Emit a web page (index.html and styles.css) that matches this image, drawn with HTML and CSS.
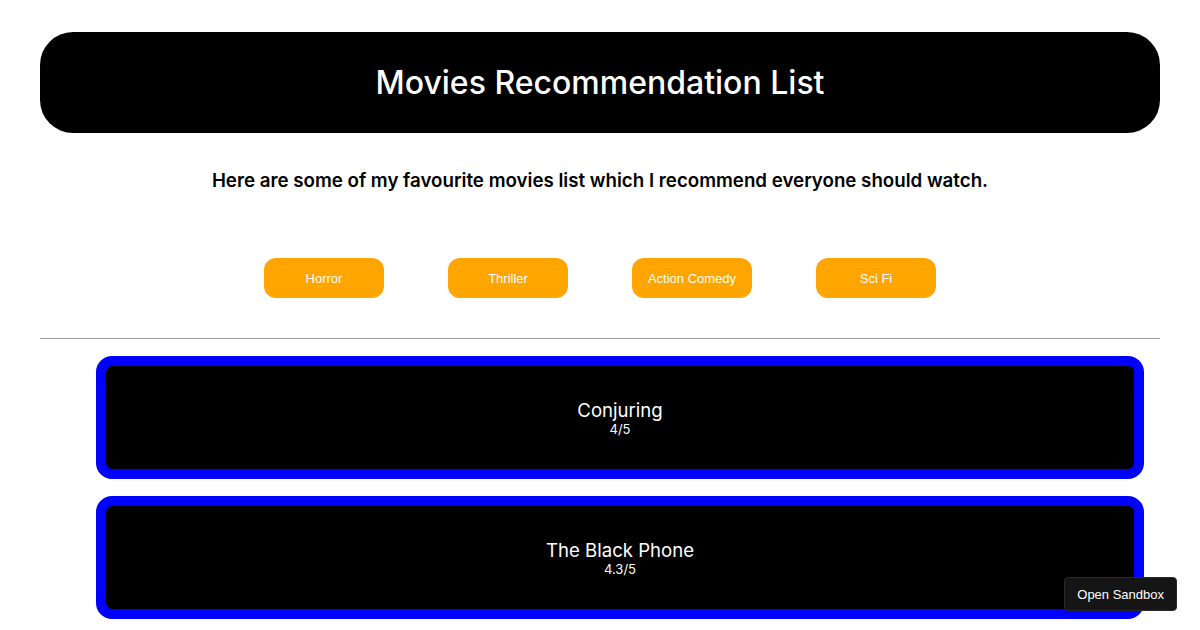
FILE: index.html
```html
<!DOCTYPE html>
<html lang="en">
<head>
<meta charset="UTF-8">
<meta name="viewport" content="width=device-width, initial-scale=1.0">
<title>Movies Recommendation List</title>
<link rel="stylesheet" href="styles.css">
</head>
<body>
<div class="app">
    <header class="title-bar">
        <h1>Movies Recommendation List</h1>
    </header>
    <p class="intro">Here are some of my favourite movies list which I recommend everyone should watch.</p>
    <div class="genres">
        <button class="genre">Horror</button>
        <button class="genre">Thriller</button>
        <button class="genre">Action Comedy</button>
        <button class="genre">Sci Fi</button>
    </div>
    <hr class="divider">
    <ul class="movies">
        <li class="movie">
            <div class="movie-name">Conjuring</div>
            <div class="movie-rating">4/5</div>
        </li>
        <li class="movie">
            <div class="movie-name">The Black Phone</div>
            <div class="movie-rating">4.3/5</div>
        </li>
    </ul>
</div>
<button class="sandbox">Open Sandbox</button>
</body>
</html>
```
FILE: styles.css
```css
body {
    margin: 0;
    font-family: Inter, "Noto Sans", sans-serif;
    background-color: #fff;
    overflow: hidden;
}

.app {
    padding: 32px 40px 0;
    text-align: center;
}

.title-bar {
    background-color: #000;
    color: #fff;
    border-radius: 33px;
    height: 101px;
    display: flex;
    align-items: center;
    justify-content: center;
}

.title-bar h1 {
    margin: 0;
    font-size: 32px;
    font-weight: 500;
}

.intro {
    margin: 36px 0 0;
    font-size: 18.72px;
    font-weight: 600;
}

.genres {
    display: flex;
    justify-content: center;
    gap: 64px;
    margin-top: 66px;
}

.genre {
    width: 120px;
    height: 40px;
    border: none;
    border-radius: 12px;
    background-color: orange;
    color: #fff;
    font-family: "Liberation Sans", Arial, sans-serif;
    font-size: 13px;
    cursor: pointer;
}

.divider {
    margin: 40px 0 0;
    border: none;
    border-top: 1px solid #999;
}

.movies {
    list-style: none;
    margin: 0;
    padding: 0 0 0 40px;
}

.movie {
    margin: 17px 16px;
    border: 10px solid blue;
    border-radius: 16px;
    background-color: #000;
    color: #fff;
    height: 102px;
    padding-top: 1px;
    display: flex;
    flex-direction: column;
    justify-content: center;
    box-sizing: content-box;
}

.movie-name {
    font-size: 18.6px;
    line-height: 22px;
}

.movie-rating {
    font-size: 13px;
    line-height: 16px;
}

.sandbox {
    position: fixed;
    right: 23px;
    bottom: 19px;
    height: 34px;
    padding: 0 12px;
    background-color: #151515;
    color: #fff;
    border: 1px solid #2a2a2a;
    border-radius: 4px;
    font-family: "Liberation Sans", Arial, sans-serif;
    font-size: 13px;
}
```
